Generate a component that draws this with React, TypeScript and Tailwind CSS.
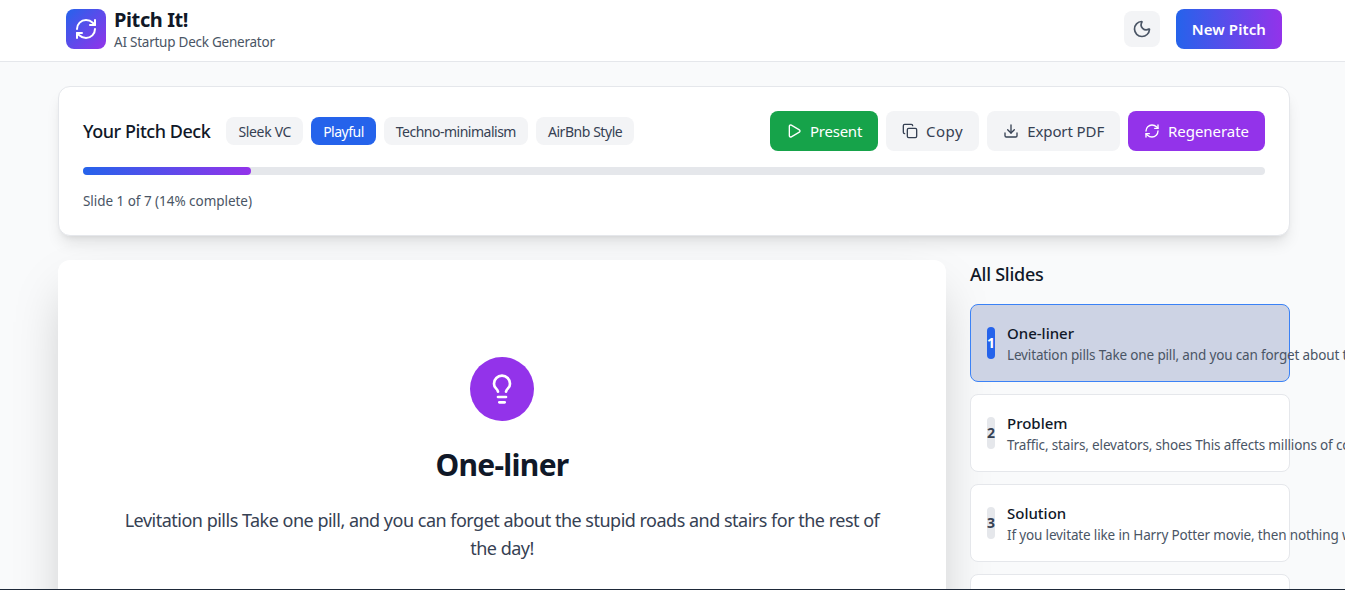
import { RefreshCw, Moon, Play, Copy, Download, Lightbulb } from 'lucide-react';

const styles = [
  { name: 'Sleek VC', active: false, spacing: 'tracking-[-0.32px]' },
  { name: 'Playful', active: true, spacing: 'tracking-[-0.5px]' },
  { name: 'Techno-minimalism', active: false, spacing: 'tracking-[-0.5px]' },
  { name: 'AirBnb Style', active: false, spacing: 'tracking-[-0.45px]' },
];

const slides = [
  { title: 'One-liner', text: 'Levitation pills Take one pill, and you can forget about the stupid roads and stairs for the rest of the day!' },
  { title: 'Problem', text: 'Traffic, stairs, elevators, shoes This affects millions of commuters every single day around the world' },
  { title: 'Solution', text: 'If you levitate like in Harry Potter movie, then nothing will stop you from getting where you want' },
  { title: 'Market', text: 'Everyone who walks, drives or takes the stairs' },
];

export default function App() {
  return (
    <div className="h-screen overflow-hidden bg-[#f9fafb] font-['Noto_Sans',sans-serif] relative">
      {/* Header */}
      <header className="h-[62px] bg-white border-b border-gray-200 pl-[66px] pr-[63px] pt-[9px] pb-3 flex items-center justify-between">
        <div className="flex items-center gap-2">
          <div className="w-10 h-10 rounded-lg bg-[linear-gradient(to_bottom_right,#2563eb,#9333ea)] flex items-center justify-center text-white">
            <RefreshCw className="w-6 h-6" />
          </div>
          <div>
            <h1 className="text-xl leading-6 font-bold text-gray-900 tracking-[-0.4px]">Pitch It!</h1>
            <p className="text-[13.5px] leading-4 text-gray-600 mt-0.5 tracking-[-0.24px]">AI Startup Deck Generator</p>
          </div>
        </div>
        <div className="flex items-center gap-4">
          <button className="w-9 h-9 rounded-lg bg-gray-100 flex items-center justify-center text-gray-600">
            <Moon className="w-5 h-5" />
          </button>
          <button className="h-10 px-4 rounded-lg bg-[linear-gradient(to_right,#2563eb,#9333ea)] text-white font-semibold text-[15px] tracking-[0.1px]">
            New Pitch
          </button>
        </div>
      </header>

      <main className="pl-[58px] pr-[55px] pt-6">
        {/* Deck toolbar */}
        <section className="h-[150px] bg-white rounded-xl border border-gray-200 shadow-lg p-6">
          <div className="flex items-center justify-between">
            <div className="flex items-center gap-4">
              <h2 className="text-lg font-medium text-gray-900 tracking-[-0.45px]">Your Pitch Deck</h2>
              <div className="flex items-center gap-2">
                {styles.map((s) => (
                  <span
                    key={s.name}
                    className={`h-7 px-3 rounded-lg text-[14px] flex items-center ${s.spacing} ${
                      s.active ? 'bg-[#2563eb] text-white' : 'bg-gray-100 text-gray-700'
                    }`}
                  >
                    {s.name}
                  </span>
                ))}
              </div>
            </div>
            <div className="flex items-center gap-2">
              <button className="h-10 px-4 rounded-lg bg-[#16a34a] text-white flex items-center gap-2 text-[15px] tracking-[-0.25px]">
                <Play className="w-4 h-4" />
                Present
              </button>
              <button className="h-10 px-4 rounded-lg bg-gray-100 text-gray-700 flex items-center gap-2 text-[15px] tracking-[0.5px]">
                <Copy className="w-4 h-4" />
                Copy
              </button>
              <button className="h-10 px-4 rounded-lg bg-gray-100 text-gray-700 flex items-center gap-2 text-[15px] tracking-[-0.1px]">
                <Download className="w-4 h-4" />
                Export PDF
              </button>
              <button className="h-10 px-4 rounded-lg bg-[#9333ea] text-white flex items-center gap-2 text-[15px] tracking-[-0.05px]">
                <RefreshCw className="w-4 h-4" />
                Regenerate
              </button>
            </div>
          </div>
          <div className="mt-4 h-2 rounded-full bg-gray-200">
            <div className="h-2 w-[14.2%] rounded-full bg-[linear-gradient(to_right,#2563eb,#9333ea)]"></div>
          </div>
          <p className="mt-4 text-[13.5px] leading-5 text-gray-600 tracking-[-0.04px]">Slide 1 of 7 (14% complete)</p>
        </section>

        <div className="mt-6 flex gap-6">
          {/* Current slide */}
          <section className="flex-1 h-[500px] bg-white rounded-xl shadow-2xl pt-[97px] px-16 flex flex-col items-center">
            <div className="w-16 h-16 rounded-full bg-[#9333ea] flex items-center justify-center text-white">
              <Lightbulb className="w-8 h-8" />
            </div>
            <h2 className="mt-[26px] text-3xl leading-9 font-bold text-gray-900 tracking-[-0.7px]">One-liner</h2>
            <p className="mt-[23px] text-lg leading-7 text-gray-700 text-center tracking-[-0.5px]">
              Levitation pills Take one pill, and you can forget about the stupid roads and stairs for the rest of the day!
            </p>
          </section>

          {/* Slide list */}
          <aside className="w-[320px] shrink-0">
            <h3 className="text-lg leading-7 font-medium text-gray-900 mb-4 tracking-[-0.25px]">All Slides</h3>
            <div className="flex flex-col gap-3">
              {slides.map((s, i) => (
                <div
                  key={s.title}
                  className={`h-[78px] rounded-lg border p-4 flex items-center gap-3 ${
                    i === 0 ? 'bg-[#cdd3e4] border-[#3b82f6]' : 'bg-white border-gray-200'
                  }`}
                >
                  <div
                    className={`w-2 h-8 shrink-0 rounded-full flex items-center justify-center text-sm font-bold ${
                      i === 0 ? 'bg-[#2563eb] text-white' : 'bg-gray-200 text-gray-700'
                    }`}
                  >
                    {i + 1}
                  </div>
                  <div className="min-w-0">
                    <div className="text-[15px] leading-6 font-medium text-gray-900">{s.title}</div>
                    <div className="text-[13.5px] leading-5 text-gray-600 whitespace-nowrap tracking-[-0.15px]">{s.text}</div>
                  </div>
                </div>
              ))}
            </div>
          </aside>
        </div>
      </main>

      <div className="absolute bottom-0 left-0 right-0 h-px bg-gray-800"></div>
    </div>
  );
}
